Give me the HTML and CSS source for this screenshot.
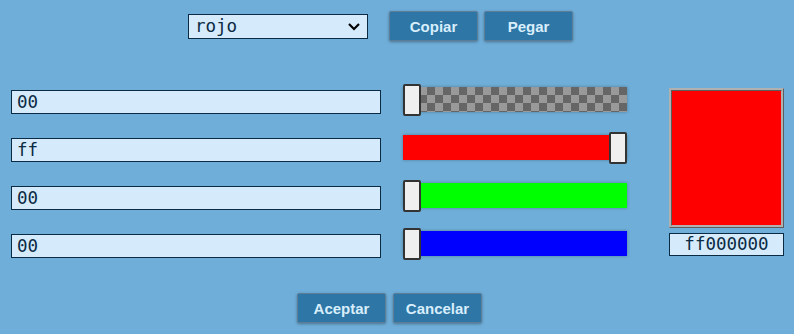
FILE: index.html
```html
<!DOCTYPE html>
<html>
<head>
<meta charset="utf-8">
<link rel="stylesheet" href="styles.css">
</head>
<body>
<div class="top">
  <div class="select"><span>rojo</span>
    <svg class="chev" width="14" height="9" viewBox="0 0 14 9"><path d="M2 2 L7 7 L12 2" fill="none" stroke="#000" stroke-width="2.2"/></svg>
  </div>
  <div class="btns">
    <button class="btn">Copiar</button>
    <button class="btn">Pegar</button>
  </div>
</div>
<div class="main">
  <div class="rows">
    <div class="row">
      <div class="field">00</div>
      <div class="slider"><div class="track alpha"></div><div class="thumb" style="left:0"></div></div>
    </div>
    <div class="row">
      <div class="field">ff</div>
      <div class="slider"><div class="track red"></div><div class="thumb" style="left:206px"></div></div>
    </div>
    <div class="row">
      <div class="field">00</div>
      <div class="slider"><div class="track green"></div><div class="thumb" style="left:0"></div></div>
    </div>
    <div class="row">
      <div class="field">00</div>
      <div class="slider"><div class="track blue"></div><div class="thumb" style="left:0"></div></div>
    </div>
  </div>
  <div class="preview-col">
    <div class="preview"></div>
    <div class="hex">ff000000</div>
  </div>
</div>
<div class="bottom">
  <button class="btn">Aceptar</button>
  <button class="btn">Cancelar</button>
</div>
</body>
</html>
```
FILE: styles.css
```css
body {
  margin: 0;
  background: #6faed9;
  width: 794px;
  height: 334px;
  overflow: hidden;
  font-family: "DejaVu Sans Mono", monospace;
  color: #0b2a44;
}
.top {
  display: flex;
  align-items: center;
  padding: 11px 0 0 188px;
  height: 30px;
}
.select {
  box-sizing: border-box;
  width: 180px;
  height: 25px;
  border: 1px solid #0b2a44;
  background: #d5eafa;
  display: flex;
  align-items: center;
  justify-content: space-between;
  padding: 0 6px 0 6px;
  font-size: 17.5px;
  color: #0b2a44;
}
.chev { display: block; }
.btns {
  display: flex;
  gap: 6px;
  margin-left: 21px;
}
.btn {
  box-sizing: border-box;
  width: 89px;
  height: 30px;
  background: #2d76a5;
  border: 1px solid #5c7e98;
  border-radius: 2px;
  box-shadow: 0 1px 3px rgba(0,0,0,0.35);
  color: #d8eefc;
  font-family: "Liberation Sans", Arial, sans-serif;
  font-weight: bold;
  font-size: 15px;
  padding: 0;
}
.main {
  display: flex;
  margin-top: 43px;
  padding-left: 11px;
}
.rows {
  display: flex;
  flex-direction: column;
  gap: 16px;
}
.row {
  display: flex;
  align-items: flex-start;
  height: 32px;
}
.field {
  box-sizing: border-box;
  width: 370px;
  height: 24px;
  margin-top: 6px;
  border: 1px solid #0b2a44;
  background: #d5eafa;
  font-size: 17.5px;
  line-height: 22px;
  padding-left: 5px;
}
.slider {
  position: relative;
  width: 224px;
  height: 32px;
  margin-left: 22px;
}
.track {
  position: absolute;
  left: 0;
  right: 0;
  top: 3px;
  height: 25px;
  box-shadow: 0 0 3px rgba(0,0,0,0.3);
}
.alpha {
  background-color: #999;
  background-image:
    linear-gradient(45deg, #666 25%, transparent 25%, transparent 75%, #666 75%),
    linear-gradient(45deg, #666 25%, transparent 25%, transparent 75%, #666 75%);
  background-size: 16px 16px;
  background-position: 0 0, 8px 8px;
}
.red { background: #ff0000; }
.green { background: #00ff00; }
.blue { background: #0000ff; }
.thumb {
  position: absolute;
  top: 0;
  box-sizing: border-box;
  width: 18px;
  height: 32px;
  background: #efefef;
  border: 2px solid #333;
  border-radius: 2px;
}
.preview-col {
  display: flex;
  flex-direction: column;
  margin-left: 42px;
  margin-top: 4px;
  gap: 5px;
}
.preview {
  box-sizing: border-box;
  width: 115px;
  height: 140px;
  background: #ff0000;
  border: 3px ridge #b0b0b0;
}
.hex {
  box-sizing: border-box;
  width: 115px;
  height: 23px;
  border: 1px solid #0b2a44;
  background: #d5eafa;
  font-size: 17.5px;
  line-height: 21px;
  text-align: center;
}
.bottom {
  display: flex;
  gap: 7px;
  padding-left: 297px;
  margin-top: 33px;
}
.btn:focus { outline: none; }
```
